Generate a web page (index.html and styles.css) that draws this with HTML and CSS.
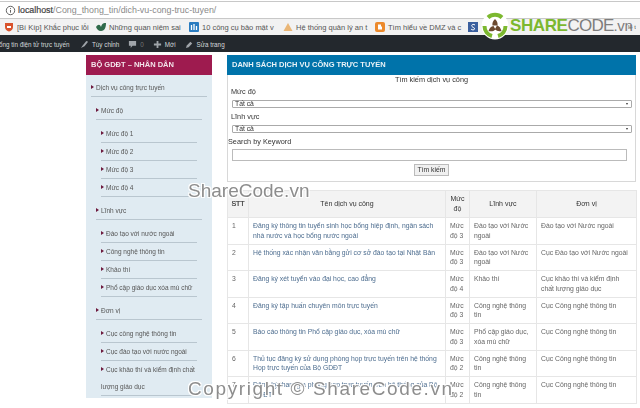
FILE: index.html
```html
<!DOCTYPE html>
<html lang="vi">
<head>
<meta charset="utf-8">
<title>Dịch vụ công trực tuyến</title>
<link rel="stylesheet" href="styles.css">
</head>
<body>
<div class="shot">
  <header class="urlbar">
    <svg class="info" viewBox="0 0 12 12"><circle cx="6" cy="6" r="4.6"/><path d="M6 5.400v3M6 3.400v1"/></svg>
    <span class="url"><b>localhost</b>/Cong_thong_tin/dich-vu-cong-truc-tuyen/</span>
  </header>
  <nav class="bookmarks">
    <span class="bm w1"><svg viewBox="0 0 10 10"><path d="M1 1h8v4c0 2.500-2 4-4 4.500C3 9 1 7.500 1 5z" fill="#d9532c"/><path d="M3 4h4v2H3z" fill="#fff"/></svg>[Bí Kíp] Khắc phục lỗi</span>
    <span class="bm w2"><svg viewBox="0 0 10 10"><path d="M0 5c2-3 4-3 5 0 1-4 3-4 5-4 0 4-1 8-5 8C2 9 1 7 0 5z" fill="#2f6a4a"/></svg>Những quan niệm sai</span>
    <span class="bm w3"><svg viewBox="0 0 10 10"><rect width="10" height="10" rx="1" fill="#2a7cc0"/><path d="M2.500 3v5M5 2v6M7.500 4v4" stroke="#fff" stroke-width="1.300"/></svg>10 công cụ bảo mật v</span>
    <span class="bm w4"><svg viewBox="0 0 10 10"><path d="M5 1l4.500 8H.5z" fill="#eab676"/></svg>Hệ thống quản lý an t</span>
    <span class="bm w5"><svg viewBox="0 0 10 10"><rect width="10" height="10" rx="2" fill="#ec8a2c"/><path d="M3 2.500h3v2h1v3H3z" fill="#fff"/></svg>Tìm hiểu về DMZ và c</span>
    <span class="bm w6"><svg viewBox="0 0 10 10"><rect width="10" height="10" fill="#3a5f9e"/><path d="M7 3C5 1.500 3 3 4 4.500s3 1 2.500 2.500C6 8.500 4 8 3 7" fill="none" stroke="#fff"/></svg><span class="tail">lế t</span></span>
  </nav>
  <div class="adminbar">
    <span class="ab first">ổng tin điện tử trực tuyến</span>
    <span class="ab"><svg viewBox="0 0 10 10"><path d="M1 9l2-3 4-5 2 1-4 5z" fill="#a0a5aa"/></svg>Tùy chỉnh</span>
    <span class="ab dim"><svg viewBox="0 0 10 10"><path d="M1 1h8v5.500H5L3 9V6.500H1z" fill="#a0a5aa"/></svg>0</span>
    <span class="ab"><svg viewBox="0 0 10 10"><path d="M4 1h2v3h3v2H6v3H4V6H1V4h3z" fill="#a0a5aa"/></svg>Mới</span>
    <span class="ab"><svg viewBox="0 0 10 10"><path d="M1 9l1-3 4-4 2 2-4 4z" fill="#a0a5aa"/></svg>Sửa trang</span>
  </div>
  <main class="page">
    <aside class="sidebar">
      <h2 class="side-title">BỘ GDĐT – NHÂN DÂN</h2>
      <ul class="tree">
        <li class="top"><a>Dịch vụ công trực tuyến</a></li>
        <li class="l1"><a>Mức độ</a></li>
        <li class="l2"><a>Mức độ 1</a></li>
        <li class="l2"><a>Mức độ 2</a></li>
        <li class="l2"><a>Mức độ 3</a></li>
        <li class="l2"><a>Mức độ 4</a></li>
        <li class="l1"><a>Lĩnh vực</a></li>
        <li class="l2"><a>Đào tạo với nước ngoài</a></li>
        <li class="l2"><a>Công nghệ thông tin</a></li>
        <li class="l2"><a>Khảo thí</a></li>
        <li class="l2"><a>Phổ cập giáo dục xóa mù chữ</a></li>
        <li class="l1"><a>Đơn vị</a></li>
        <li class="l2"><a>Cục công nghệ thông tin</a></li>
        <li class="l2"><a>Cục đào tạo với nước ngoài</a></li>
        <li class="l2 wrap"><a>Cục khảo thí và kiểm định chất lượng giáo dục</a></li>
      </ul>
    </aside>
    <section class="content">
      <div class="panel">
        <h2 class="panel-title">DANH SÁCH DỊCH VỤ CÔNG TRỰC TUYẾN</h2>
        <form class="search">
          <div class="search-title">Tìm kiếm dịch vụ công</div>
          <label class="lbl">Mức độ</label>
          <div class="select"><span>Tất cả</span><i></i></div>
          <label class="lbl">Lĩnh vực</label>
          <div class="select"><span>Tất cả</span><i></i></div>
          <label class="lbl kw">Search by Keyword</label>
          <div class="input"></div>
          <div class="btn-row"><span class="btn">Tìm kiếm</span></div>
        </form>
      </div>
      <table class="grid">
        <colgroup><col class="c1"><col class="c2"><col class="c3"><col class="c4"><col class="c5"></colgroup>
        <thead><tr><th>STT</th><th>Tên dịch vụ công</th><th>Mức độ</th><th>Lĩnh vực</th><th>Đơn vị</th></tr></thead>
        <tbody>
          <tr><td>1</td><td><a>Đăng ký thông tin tuyển sinh học bổng hiệp định, ngân sách nhà nước và học bổng nước ngoài</a></td><td>Mức độ 3</td><td>Đào tạo với Nước ngoài</td><td>Đào tạo với Nước ngoài</td></tr>
          <tr><td>2</td><td><a>Hệ thống xác nhận văn bằng gửi cơ sở đào tạo tại Nhật Bản</a></td><td>Mức độ 3</td><td>Đào tạo với Nước ngoài</td><td>Cục Đào tạo với Nước ngoài</td></tr>
          <tr><td>3</td><td><a>Đăng ký xét tuyển vào đại học, cao đẳng</a></td><td>Mức độ 4</td><td>Khảo thí</td><td>Cục khảo thí và kiểm định chất lượng giáo dục</td></tr>
          <tr><td>4</td><td><a>Đăng ký tập huấn chuyên môn trực tuyến</a></td><td>Mức độ 3</td><td>Công nghệ thông tin</td><td>Cục Công nghệ thông tin</td></tr>
          <tr><td>5</td><td><a>Báo cáo thông tin Phổ cập giáo dục, xóa mù chữ</a></td><td>Mức độ 3</td><td>Phổ cập giáo dục, xóa mù chữ</td><td>Cục Công nghệ thông tin</td></tr>
          <tr><td>6</td><td><a>Thủ tục đăng ký sử dụng phòng họp trực tuyến trên hệ thống Họp trực tuyến của Bộ GDĐT</a></td><td>Mức độ 2</td><td>Công nghệ thông tin</td><td>Cục Công nghệ thông tin</td></tr>
          <tr><td>7</td><td><a>Đăng ký tham gia phòng họp trực tuyến trên hệ thống của Bộ GDĐT</a></td><td>Mức độ 2</td><td>Công nghệ thông tin</td><td>Cục Công nghệ thông tin</td></tr>
        </tbody>
      </table>
    </section>
  </main>
  <div class="logo">
    <svg class="logo-mark" viewBox="0 0 28 28"><circle cx="14" cy="14" r="13.500" fill="#fff"/><path d="M7 5.500A10.500 10.500 0 0 1 21 5.500M24.500 14A10.500 10.500 0 0 1 17 24M11 24A10.500 10.500 0 0 1 3.500 14" fill="none" stroke="#7cb82f" stroke-width="4"/><path d="M14 7c2 2 3 4 2.500 6.500h-5C11 11 12 9 14 7zM7.500 19c1-3 2.500-4.500 5-5l2 3.500c-2 2-4 2-7 1.500zM20.500 19c-3 .5-5 0-6.500-2l2-3.500c2.500.5 3.500 2.500 4.500 5.500z" fill="#6b4a2f"/></svg>
    <span class="logo-text"><b>SHARE</b>CODE<em>.vn</em></span>
  </div>
  <div class="wm wm1">ShareCode.vn</div>
  <div class="wm wm2">Copyright © ShareCode.vn</div>
</div>
</body>
</html>
```
FILE: styles.css
```css
* { box-sizing: border-box; }
html, body { margin: 0; padding: 0; background: #fff; }
.shot {
  position: relative;
  width: 640px;
  height: 408px;
  overflow: hidden;
  font-family: "Liberation Sans", Arial, sans-serif;
  font-size: 8px;
  color: #444;
  filter: blur(0.35px);
}
.urlbar {
  height: 18px;
  margin-top: 1px;
  display: flex;
  align-items: center;
  padding-left: 5px;
  gap: 2px;
  background: #fff;
  border-bottom: 1px solid #c8c8c8;
  border-top: 1px solid #c8c8c8;
  font-size: 8.900px;
  color: #8a8a8a;
}
.urlbar b { color: #444; font-weight: 400; -webkit-text-stroke: 0.2px #444; }
.info { width: 11px; height: 11px; fill: none; stroke: #555; stroke-width: 1; }
.bookmarks {
  height: 16px;
  display: flex;
  align-items: center;
  padding-left: 4px;
  background: #f2f2f2;
  font-size: 7.500px;
  color: #555;
  white-space: nowrap;
}
.bm { display: flex; align-items: center; gap: 3px; flex: none; overflow: hidden; }
.bm svg { width: 10px; height: 10px; flex: none; }
.w1 { width: 92px; }
.w2 { width: 93px; }
.w3 { width: 94px; }
.w4 { width: 92px; }
.w5 { width: 93px; }
.w6 { width: 168px; justify-content: space-between; }
.tail { font-size: 6px; }
.adminbar {
  height: 17px;
  padding-top: 1px;
  display: flex;
  align-items: center;
  gap: 9px;
  background: #23282d;
  color: #d5d8da;
  font-size: 6.300px;
  white-space: nowrap;
  overflow: hidden;
}
.ab { display: flex; align-items: center; gap: 3px; flex: none; }
.ab svg { width: 9px; height: 9px; }
.first { width: 72px; margin-left: -1px; }
.dim { color: #777; }
.page {
  display: flex;
  align-items: flex-start;
  padding: 3px 4px 0 86px;
  gap: 15px;
}
.sidebar { width: 126px; flex: none; background: #e0ebf2; height: 343px; }
.side-title {
  margin: 0;
  height: 20px;
  line-height: 20px;
  padding-left: 5px;
  background: #9e1b4f;
  color: #f3e4ea;
  font-size: 7.500px;
  font-weight: 700;
}
.tree { list-style: none; margin: 0; padding: 4px 5px 0; font-size: 6.500px; color: #555; }
.tree li a {
  display: block;
  position: relative;
  line-height: 17px;
  border-bottom: 1px solid #b9c6cf;
  padding-left: 5px;
}
.tree .wrap a { padding-left: 0; text-indent: 5px; }
.tree li a::before {
  content: "";
  position: absolute;
  left: 0;
  top: 6px;
  border-left: 3px solid #6d1a3e;
  border-top: 2px solid transparent;
  border-bottom: 2px solid transparent;
}
.tree .top { margin-bottom: 5px; }
.tree .l1 { margin: 5px 5px 5px 5px; }
.tree .l2 { margin: 0 10px; }
.tree .l2:has(+ .l1) { margin-bottom: 5px; }
.content { width: 409px; flex: none; }
.panel { border: 1px solid #d8d8d8; border-top: 0; height: 127px; }
.panel-title {
  margin: 0 -1px;
  height: 20px;
  line-height: 20px;
  padding-left: 5px;
  background: #0073aa;
  color: #e8f2f7;
  font-size: 7.500px;
  font-weight: 700;
}
.search { display: flex; flex-direction: column; color: #333; font-size: 7.300px; }
.search-title { text-align: center; line-height: 10px; }
.lbl { line-height: 10px; margin: 2px 0 2px 3px; }
.kw { margin: 2px 0 2px 0; }
.select {
  display: flex;
  justify-content: space-between;
  align-items: center;
  height: 8px;
  margin: 1px 0 2px 4px;
  width: 400px;
  padding: 0 3px 0 2px;
  border: 1px solid #aaa;
  border-radius: 1px;
  font-size: 6.800px;
  line-height: 6px;
}
.select i { border-top: 2px solid #333; border-left: 1px solid transparent; border-right: 1px solid transparent; }
.input { height: 12px; margin-left: 4px; width: 395px; border: 1px solid #bbb; }
.btn-row { text-align: center; margin-top: 3px; line-height: 0; }
.btn {
  display: inline-block;
  width: 35px;
  height: 12px;
  line-height: 10px;
  border: 1px solid #bbb;
  background: #f0f0f0;
  font-size: 6.800px;
  text-align: center;
}
.grid {
  width: 409px;
  margin-top: 8px;
  border-collapse: collapse;
  table-layout: fixed;
  font-size: 6.800px;
  line-height: 9.700px;
  color: #666;
}
.c1 { width: 21px; }
.c2 { width: 197px; }
.c3 { width: 24px; }
.c4 { width: 67px; }
.c5 { width: 100px; }
.grid th {
  background: #f3f3f3;
  border: 1px solid #e6e6e6;
  font-weight: 400;
  color: #333;
  height: 27px;
  padding: 0;
  text-align: center;
  font-size: 7px;
}
.grid th:first-child { -webkit-text-stroke: 0.2px #333; }
.grid td {
  height: 26.500px;
  border: 1px solid #e6e6e6;
  padding: 3px 4px;
  vertical-align: top;
}
.grid a { color: #4d6d8f; }
.logo {
  position: absolute;
  left: 481px;
  top: 12px;
  display: flex;
  align-items: center;
  gap: 1px;
}
.logo-mark { width: 28px; height: 28px; }
.logo-text { font-size: 17px; color: #7d7d7d; letter-spacing: -0.8px; white-space: nowrap; }
.logo-text b { color: #7cb82f; letter-spacing: -0.4px; }
.logo-text em { font-style: normal; font-size: 15px; letter-spacing: -0.3px; }
.wm {
  position: absolute;
  color: #8d8d8d;
  font-size: 19px;
  white-space: nowrap;
  text-shadow: 1px 1px 0 #fff, -1px -1px 0 #fff, 1px -1px 0 #fff, -1px 1px 0 #fff;
}
.wm1 { left: 188px; top: 180px; }
.wm2 { left: 188px; top: 378px; letter-spacing: 1.600px; }
```
